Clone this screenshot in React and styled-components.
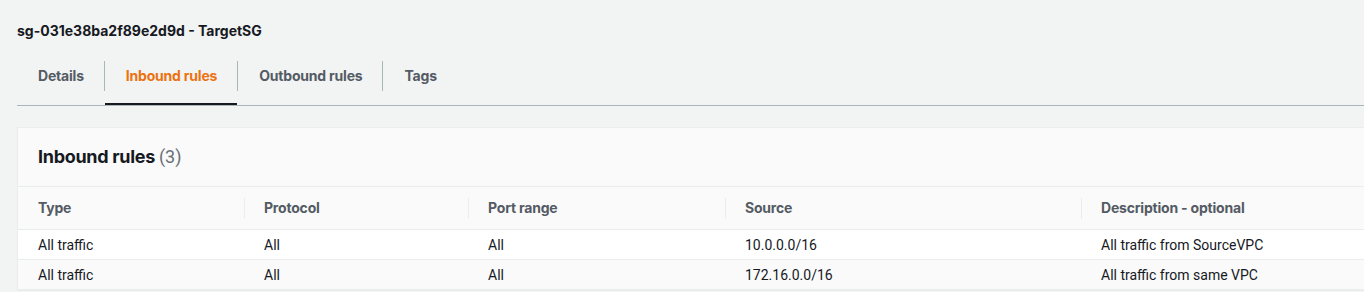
import React from 'react';
import styled, { createGlobalStyle } from 'styled-components';

const GlobalStyle = createGlobalStyle`
    body {
        margin: 0;
        background-color: #f2f3f3;
        font-family: Roboto, "Liberation Sans", sans-serif;
        color: #16191f;
        overflow: hidden;
    }
`

const BOLD = `Inter, Roboto, "Liberation Sans", sans-serif`;

const Page = styled.div`
    width: 1364px;
    height: 292px;
    overflow: hidden;
    padding: 21px 0 0 17px;
    box-sizing: border-box;
`

const Title = styled.h2`
    margin: 0;
    font-family: ${BOLD};
    font-size: 14px;
    line-height: 20px;
    font-weight: 700;
    color: #16191f;
`

const TabBar = styled.div`
    display: flex;
    margin-top: 12px;
    padding-left: 1px;
    width: 1400px;
    border-bottom: 1px solid #aab7b8;
`

const Tab = styled.div`
    padding: 13px 20px 17px 21px;
    font-family: ${BOLD};
    font-size: 14px;
    line-height: 20px;
    font-weight: 700;
    letter-spacing: -0.2px;
    color: ${props => props.active ? '#ec7211' : '#545b64'};
    border-bottom: 2px solid ${props => props.active ? '#16191f' : 'transparent'};
    margin-left: ${props => props.first ? '-1px' : '0'};
    cursor: pointer;
`

const TabSeparator = styled.div`
    width: 1px;
    height: 30px;
    margin-top: 8px;
    background-color: #aab7b8;
`

const Panel = styled.div`
    margin-top: 21px;
    width: 1400px;
    border: 1px solid #eaeded;
    background-color: #fafafa;
`

const PanelHeader = styled.div`
    padding: 19px 20px;
    font-family: ${BOLD};
    font-size: 18px;
    line-height: 20px;
    font-weight: 700;
    letter-spacing: -0.3px;
    color: #16191f;
    border-bottom: 1px solid #eaeded;
`

const Count = styled.span`
    font-family: Roboto, "Liberation Sans", sans-serif;
    font-weight: 400;
    letter-spacing: 0;
    color: #687078;
`

const Row = styled.div`
    display: grid;
    grid-template-columns: 226px 224px 257px 356px 1fr;
    height: ${props => props.head ? '42px' : '29px'};
    background-color: ${props => props.shaded ? '#fafafa' : '#ffffff'};
    border-bottom: 1px solid #eaeded;
`

const HeadCell = styled.div`
    display: flex;
    align-items: center;
    padding: 0 20px 1px;
    font-family: ${BOLD};
    font-size: 14px;
    font-weight: 700;
    letter-spacing: -0.2px;
    color: #545b64;
    background: ${props => props.divider ? 'linear-gradient(#eaeded, #eaeded) left center / 1px 21px no-repeat' : 'none'};
`

const Cell = styled.div`
    display: flex;
    align-items: center;
    padding: 0 20px;
    font-size: 14px;
    color: #16191f;
    white-space: nowrap;
`

const columns = ['Type', 'Protocol', 'Port range', 'Source', 'Description - optional'];

const rules = [
    ['All traffic', 'All', 'All', '10.0.0.0/16', 'All traffic from SourceVPC'],
    ['All traffic', 'All', 'All', '172.16.0.0/16', 'All traffic from same VPC'],
];

const tabs = ['Details', 'Inbound rules', 'Outbound rules', 'Tags'];

export default function App() {
    return (
        <Page>
            <GlobalStyle />
            <Title>sg-031e38ba2f89e2d9d - TargetSG</Title>
            <TabBar>
                {tabs.map((t, i) => (
                    <React.Fragment key={t}>
                        {i > 0 && <TabSeparator />}
                        <Tab first={i === 0} active={t === 'Inbound rules'}>{t}</Tab>
                    </React.Fragment>
                ))}
            </TabBar>
            <Panel>
                <PanelHeader>Inbound rules <Count>(3)</Count></PanelHeader>
                <Row head shaded>
                    {columns.map((c, i) => (
                        <HeadCell key={c} divider={i > 0}>{c}</HeadCell>
                    ))}
                </Row>
                {rules.map((r, i) => (
                    <Row key={i} shaded={i % 2 === 1}>
                        {r.map((v, j) => <Cell key={j}>{v}</Cell>)}
                    </Row>
                ))}
            </Panel>
        </Page>
    );
}
